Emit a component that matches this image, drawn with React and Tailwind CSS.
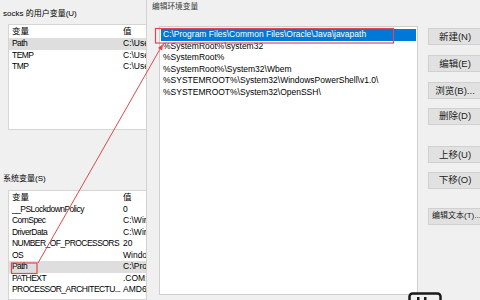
const userVars = [
    { name: 'Path', value: 'C:\\Users\\socks\\AppData', selected: true },
    { name: 'TEMP', value: 'C:\\Users\\socks\\AppData' },
    { name: 'TMP', value: 'C:\\Users\\socks\\AppData' },
];

const systemVars = [
    { name: '__PSLockdownPolicy', value: '0' },
    { name: 'ComSpec', value: 'C:\\Windows\\system32' },
    { name: 'DriverData', value: 'C:\\Windows\\System32' },
    { name: 'NUMBER_OF_PROCESSORS', value: '20' },
    { name: 'OS', value: 'Windows_NT' },
    { name: 'Path', value: 'C:\\Program Files', selected: true },
    { name: 'PATHEXT', value: '.COM;.EXE;.BAT' },
    { name: 'PROCESSOR_ARCHITECTU...', value: 'AMD64' },
];

const paths = [
    'C:\\Program Files\\Common Files\\Oracle\\Java\\javapath',
    '%SystemRoot%\\system32',
    '%SystemRoot%',
    '%SystemRoot%\\System32\\Wbem',
    '%SYSTEMROOT%\\System32\\WindowsPowerShell\\v1.0\\',
    '%SYSTEMROOT%\\System32\\OpenSSH\\',
];

const buttons = [
    { label: '新建(N)', mt: 'mt-[2px]' },
    { label: '编辑(E)', mt: 'mt-[10px]' },
    { label: '浏览(B)...', mt: 'mt-[10px]' },
    { label: '删除(D)', mt: 'mt-[8.5px]' },
    { label: '上移(U)', mt: 'mt-[21.5px]' },
    { label: '下移(O)', mt: 'mt-[8.5px]' },
    { label: '编辑文本(T)...', mt: 'mt-[19px]', left: true },
];

function VarList({ rows, headerH, className }) {
    return (
        <div className={`ml-[8px] w-[150px] bg-white border border-[#d5d5d5] ${className}`}>
            <div className={`flex items-center ${headerH} pl-[3px]`}>
                <span className="w-[111px] shrink-0">变量</span>
                <span>值</span>
            </div>
            {rows.map((row) => (
                <div
                    key={row.name}
                    className={`flex items-center h-[11.5px] pl-[3px] whitespace-nowrap ${
                        row.selected ? 'bg-[#dedede]' : ''
                    }`}
                >
                    <span className="w-[111px] shrink-0 overflow-hidden tracking-[-0.55px]">{row.name}</span>
                    <span>{row.value}</span>
                </div>
            ))}
        </div>
    );
}

export default function App() {
    return (
        <div
            className="relative w-[480px] h-[300px] overflow-hidden bg-[#f0f0f0] flex text-[8.5px] leading-[11.5px] text-black"
            style={{ fontFamily: '"Liberation Sans", "Noto Sans CJK SC", sans-serif' }}
        >
            {/* background window: environment variables */}
            <div className="w-[146px] shrink-0 overflow-hidden flex flex-col">
                <div className="mt-[8px] h-[11px] leading-[11px] pl-[3px] text-[8px] whitespace-nowrap">socks 的用户变量(U)</div>
                <VarList rows={userVars} headerH="h-[13px]" className="mt-[5px] h-[106px]" />
                <div className="mt-[42.5px] h-[11px] leading-[11px] pl-[3px] text-[8px]">系统变量(S)</div>
                <VarList rows={systemVars} headerH="h-[12.5px]" className="mt-[6.5px] flex-1" />
            </div>

            {/* edit dialog */}
            <div className="flex-1 flex flex-col border-l border-[#d2d2d2] bg-[#f0f0f0]">
                <div className="h-[14px] leading-[14px] pl-[5px] text-[7.7px] text-[#3a3a3a]">编辑环境变量</div>
                <div className="flex mt-[12px]">
                    <div className="ml-[12px] w-[259px] h-[269px] bg-white border border-[#cfcfcf] pt-[2px]">
                        {paths.map((p, i) => (
                            <div
                                key={p}
                                className={`h-[11.6px] leading-[11.6px] pl-[2px] mx-[1px] whitespace-nowrap ${
                                    i === 0 ? 'bg-[#0078d7] text-white' : ''
                                }`}
                            >
                                {p}
                            </div>
                        ))}
                    </div>
                    <div className="ml-[10px] flex flex-col">
                        {buttons.map((b) => (
                            <button
                                key={b.label}
                                className={`${b.mt} w-[54px] h-[17px] flex items-center ${
                                    b.left ? 'justify-start pl-[3px] text-[8px]' : 'justify-center text-[9.5px]'
                                } whitespace-nowrap bg-[#e1e1e1] border border-[#d0d0d0] text-[#222]`}
                            >
                                {b.label}
                            </button>
                        ))}
                    </div>
                </div>
            </div>

            {/* red annotations */}
            <svg className="absolute inset-0 pointer-events-none" width="480" height="300" viewBox="0 0 480 300">
                <rect x="155.5" y="28.5" width="238" height="14.5" fill="none" stroke="#e0484e" strokeWidth="1.2" />
                <rect x="11.5" y="263" width="25.5" height="10.5" fill="none" stroke="#e0484e" strokeWidth="1.2" />
                <line x1="38" y1="263" x2="161.5" y2="46.5" stroke="#e0484e" strokeWidth="1" />
                <polygon points="163,44 162.2,50.4 157.9,48" fill="#e0484e" />
            </svg>

            {/* watermark corner */}
            <svg className="absolute left-[408px] top-[292px]" width="34" height="12" viewBox="0 0 34 12">
                <rect x="1.5" y="1.5" width="31" height="14" rx="3" fill="none" stroke="#1a1a1a" strokeWidth="2.5" />
                <rect x="9" y="5" width="2.5" height="7" fill="#1a1a1a" />
                <rect x="16" y="5" width="2.5" height="7" fill="#1a1a1a" />
            </svg>
        </div>
    );
}
